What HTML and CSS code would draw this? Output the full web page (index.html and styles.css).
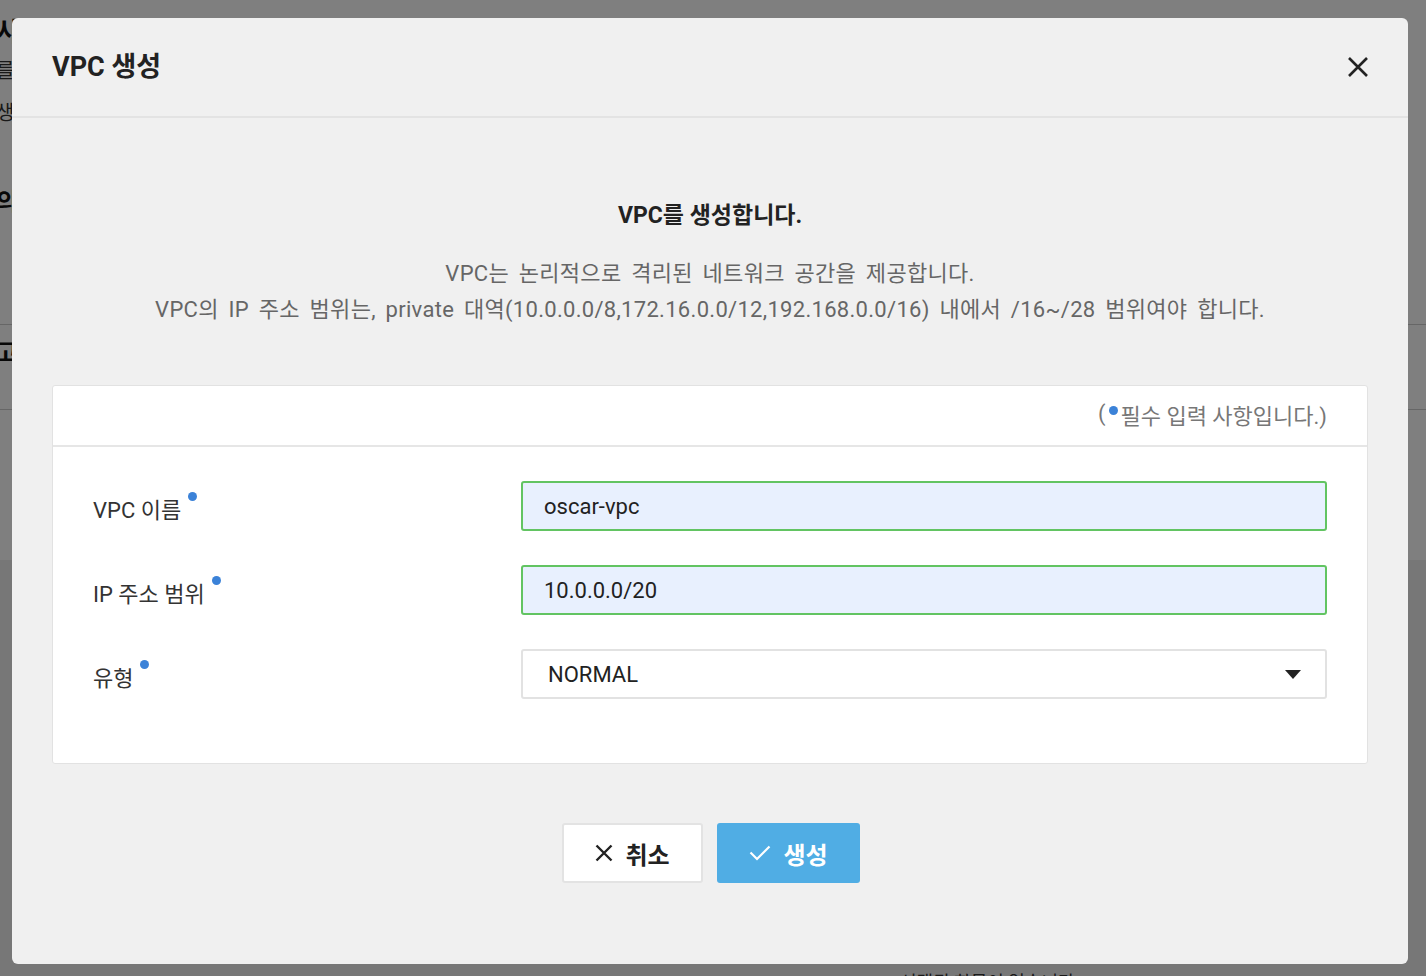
FILE: index.html
```html
<!DOCTYPE html>
<html lang="ko">
<head>
<meta charset="utf-8">
<title>VPC 생성</title>
<link rel="stylesheet" href="styles.css">
</head>
<body>
<div class="page">
  <div class="page-top">
    <div class="pg-title">사설 네트워크</div>
    <div class="pg-text">를 생성하고 관리합니다</div>
    <div class="pg-text">생성</div>
    <div class="pg-sub">의 목록</div>
    <div class="pg-table">
      <div class="pg-row">고유 번호</div>
    </div>
  </div>
  <div class="page-bottom">
    <div class="pg-foot">선택된 항목이 없습니다</div>
  </div>
</div>

<div class="overlay">
  <div class="modal">
    <div class="modal-header">
      <h1 class="modal-title">VPC 생성</h1>
      <button class="close-btn" aria-label="닫기">
        <svg width="22" height="22" viewBox="0 0 22 22"><path d="M2 2 L20 20 M20 2 L2 20" stroke="#222" stroke-width="2.6" stroke-linecap="butt"/></svg>
      </button>
    </div>
    <div class="modal-body">
      <div class="intro">
        <h2 class="intro-title">VPC를 생성합니다.</h2>
        <p class="intro-desc">VPC는 논리적으로 격리된 네트워크 공간을 제공합니다.<br>VPC의 IP 주소 범위는, private 대역(10.0.0.0/8,172.16.0.0/12,192.168.0.0/16) 내에서 /16~/28 범위여야 합니다.</p>
      </div>
      <div class="card">
        <div class="card-head">(<span class="dot"></span>필수 입력 사항입니다.)</div>
        <div class="card-body">
          <div class="field">
            <label class="field-label">VPC 이름<span class="dot sup"></span></label>
            <div class="input valid">oscar-vpc</div>
          </div>
          <div class="field">
            <label class="field-label">IP 주소 범위<span class="dot sup"></span></label>
            <div class="input valid">10.0.0.0/20</div>
          </div>
          <div class="field">
            <label class="field-label">유형<span class="dot sup"></span></label>
            <div class="input select"><span>NORMAL</span><span class="caret"></span></div>
          </div>
        </div>
      </div>
      <div class="actions">
        <button class="btn btn-cancel">
          <svg width="18" height="18" viewBox="0 0 18 18"><path d="M1.5 1.5 L16.5 16.5 M16.5 1.5 L1.5 16.5" stroke="#222" stroke-width="2.4"/></svg>
          <span>취소</span>
        </button>
        <button class="btn btn-create">
          <svg width="22" height="16" viewBox="0 0 22 16"><path d="M1.5 7.5 L8 14 L20.5 1.5" fill="none" stroke="#fff" stroke-width="2.2"/></svg>
          <span>생성</span>
        </button>
      </div>
    </div>
  </div>
</div>
</body>
</html>
```
FILE: styles.css
```css
* { box-sizing: border-box; }
html, body { margin: 0; padding: 0; }
body {
  width: 1426px;
  height: 976px;
  overflow: hidden;
  font-family: "Roboto", "Noto Sans CJK KR", sans-serif;
  background: #eeeeee;
  position: relative;
}

/* background page */
.page { height: 976px; display: flex; flex-direction: column; overflow: hidden; }
.page-top { flex: none; background: #ffffff; height: 560px; padding: 14px 0 0 0; margin-left: -4px; }
.pg-title { font-size: 26px; font-weight: 700; color: #111; line-height: 36px; }
.pg-text { font-size: 20px; color: #333; line-height: 42px; }
.pg-sub { font-size: 24px; font-weight: 700; color: #111; margin-top: 48px; line-height: 40px; }
.pg-table { margin-top: 102px; border-top: 1px solid #ccc; border-bottom: 1px solid #ccc; height: 86px; }
.pg-row { font-size: 24px; font-weight: 700; line-height: 56px; color: #111; }
.page-bottom { flex: none; }
.pg-foot { margin: 408px 0 0 900px; font-size: 18px; color: #333; }

/* overlay */
.overlay { position: absolute; inset: 0; background: rgba(0, 0, 0, 0.5); }
.modal {
  position: absolute;
  left: 12px;
  top: 18px;
  width: 1396px;
  height: 946px;
  background: #f0f0f0;
  border-radius: 6px;
  display: flex;
  flex-direction: column;
}
.modal-header {
  height: 100px;
  border-bottom: 2px solid #e3e3e3;
  display: flex;
  align-items: center;
  justify-content: space-between;
  padding: 0 39px 0 40px;
}
.modal-title { margin: 0; font-size: 27px; font-weight: 700; color: #222; padding-bottom: 6px; }
.close-btn { border: 0; background: none; padding: 0; width: 22px; height: 22px; display: flex; cursor: pointer; }

.modal-body { padding: 0 40px; }
.intro { text-align: center; padding-top: 84px; }
.intro-title { margin: 0; font-size: 23px; font-weight: 700; color: #222; line-height: 28px; }
.intro-desc { margin: 26px 0 0; font-size: 22px; line-height: 36px; color: #666; letter-spacing: 0.3px; word-spacing: 4px; }

.card {
  margin-top: 57px;
  background: #fff;
  border: 1px solid #e2e2e2;
  border-radius: 3px;
}
.card-head {
  height: 61px;
  border-bottom: 2px solid #e6e6e6;
  display: flex;
  align-items: center;
  justify-content: flex-end;
  padding: 0 40px 4px 0;
  font-size: 22px;
  color: #777;
}
.dot { display: inline-block; width: 9px; height: 9px; border-radius: 50%; background: #3b82d8; align-self: flex-start; margin: 20px 2px 0 4px; }
.card-body { padding: 34px 40px 64px 40px; display: flex; flex-direction: column; gap: 34px; }
.field { display: flex; align-items: center; }
.field-label { width: 428px; flex: none; font-size: 22px; color: #333; padding-top: 4px; display: flex; }
.dot.sup { margin: 0 0 0 7px; }
.input {
  flex: 1;
  height: 50px;
  border-radius: 3px;
  font-size: 22px;
  color: #222;
  display: flex;
  align-items: center;
  padding: 0 21px;
}
.input.valid { background: #e8f0fe; border: 2px solid #62c462; }
.input.select { background: #fff; border: 2px solid #e2e2e2; padding: 0 24px 0 25px; justify-content: space-between; }
.caret { width: 0; height: 0; border-left: 8px solid transparent; border-right: 8px solid transparent; border-top: 9px solid #222; margin-top: 1px; }

.actions { display: flex; justify-content: center; gap: 14px; margin-top: 59px; padding-left: 2px; }
.btn {
  height: 60px;
  border-radius: 3px;
  font-family: "Roboto", "Noto Sans CJK KR", sans-serif;
  font-size: 24px;
  font-weight: 700;
  display: flex;
  align-items: center;
  justify-content: center;
  gap: 12px;
  cursor: pointer;
  padding: 0;
}
.btn-cancel { width: 141px; background: #fff; border: 2px solid #e3e3e3; color: #222; }
.btn-create { width: 143px; background: #50ade4; border: 0; color: #fff; }
```
